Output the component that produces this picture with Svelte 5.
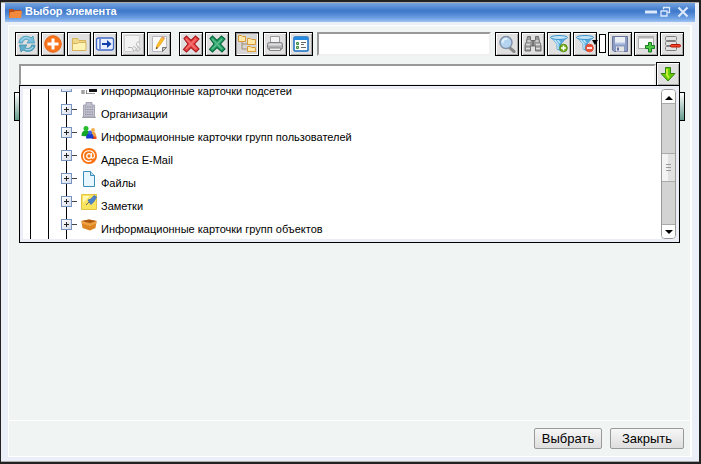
<script>
  const left = ['refresh', 'add', 'folder', 'go', 'copy', 'edit', 'red', 'green', 'tree', 'print', 'props'];
  const gaps = { copy: 4, red: 8, tree: 6, print: 4 };
  const right = ['search', 'binoculars', 'filterAdd', 'filterDel', 'save', 'newTab', 'remove'];
  const rows = [
    ['subnet', 'Информационные карточки подсетей'],
    ['building', 'Организации'],
    ['users', 'Информационные карточки групп пользователей'],
    ['mail', 'Адреса E-Mail'],
    ['file', 'Файлы'],
    ['note', 'Заметки'],
    ['box', 'Информационные карточки групп объектов'],
    ['', '']
  ];
</script>

{#snippet funnel()}
  <path d="M2 3L8 10V15l4 2V10l6-7z" fill="#56a9dc" stroke="#4a9acb" stroke-width=".8" />
  <path d="M5 5l4 5v5M8 5l3 4" stroke="#bde5fa" stroke-width="1.500" fill="none" />
  <ellipse cx="10" cy="3.500" rx="8.500" ry="2" fill="#c3e4f7" stroke="#3f94cd" />
{/snippet}

{#snippet cross(fill, edge)}
  <path d="M3 4.500L5.500 2 10 6.500 14.500 2 18 5 13.500 10 18 15 15 18 10 13.500 5.500 18 2.500 15.500 7 10z" fill={fill} stroke={edge} stroke-width="1.100" />
  <path d="M5 5l10 10M15 5L5 15" stroke="#fff" stroke-opacity=".25" stroke-width="1.500" />
{/snippet}

{#snippet tool(name)}
  <svg width="20" height="20" viewBox="0 0 20 20">
    {#if name === 'refresh'}
      <path d="M2 9C2 3 9 0 14 4l2-2 1.500 7H10l2-2.500C9 4 6 6 5.500 9z" fill="#78c0de" stroke="#4497b7" stroke-width=".8" />
      <path d="M18 11c0 6-7 8-12 5l-2 2-1.500-7H10l-2 2.500c3 2 6 .5 6.500-2.500z" fill="#62aeca" stroke="#3b8cab" stroke-width=".8" />
      <path d="M4 7c2-4 6-4 9-2M16 13c-2 3-6 3-8 2" fill="none" stroke="#b4deec" />
    {:else if name === 'add'}
      <circle cx="10" cy="10" r="8.300" fill="#f7741c" stroke="#ef6512" />
      <path d="M10 4.500v11M4.500 10h11" stroke="#fff" stroke-width="3" />
    {:else if name === 'folder'}
      <path d="M3.500 16.500v-12h5l1.500 2h6.500v10z" fill="#efd888" stroke="#d6b35b" />
      <path d="M3.500 16.500v-7h5l1-1h7.500v8z" fill="#fff3b4" stroke="#d6b35b" />
    {:else if name === 'go'}
      <rect x="1.500" y="4" width="17" height="12" rx="2" fill="#e7effc" stroke="#4569c8" stroke-width="1.300" />
      <path d="M5 5v10" stroke="#7792d6" stroke-width="2" />
      <path d="M7 9h5V6l4.500 4-4.500 4v-3H7z" fill="#123fae" />
    {:else if name === 'copy'}
      <path d="M1.500 1.500h15v10l-6 6h-9z" fill="#f3f3f3" stroke="#d0d0d0" />
      <path d="M17 8c-4-1-4 3-3 4s3 1 3 3-3 3-4 1M5 13.500h4l2 4M10 13c2-1 4 1 3 4" fill="none" stroke="#b6b6b6" />
    {:else if name === 'edit'}
      <path d="M3.500 2.500h14v11l-4 4h-10z" fill="#fafafa" stroke="#b6b6be" />
      <path d="M17.500 13.500l-4 4v-4z" fill="#ccc" stroke="#777" />
      <path d="M7 15l1-4 5-8 2.500 1.500-5.500 8z" fill="#ffc02d" stroke="#e99a15" stroke-width=".7" />
      <path d="M7 15l.5-2 1.500 1z" fill="#222" /><path d="M13 3l2.500 1.500" stroke="#e59b78" stroke-width="2" />
    {:else if name === 'red'}
      {@render cross('#ef4545', '#a71a1e')}
    {:else if name === 'green'}
      {@render cross('#25a567', '#0b653c')}
    {:else if name === 'tree'}
      <path d="M5 7v8h5M5 10h6" stroke="#a28b70" fill="none" />
      <g fill="#ffe8a8" stroke="#d89a3a">
        <path d="M1.500 1.500h3l1 1h3v5h-7zM10.500 4.500h3l1 1h4v5h-8zM10.500 12.500h3l1 1h4v4h-8z" />
      </g>
    {:else if name === 'print'}
      <path d="M5.500 8V2.500h9V8" fill="#f4f4f4" stroke="#999" />
      <rect x="2.500" y="8.500" width="15" height="7" rx="2" fill="#b1b1b5" stroke="#808084" />
      <path d="M3.500 10.500h13" stroke="#ddd" stroke-width="2" /><path d="M4.500 14h11v2.500h-11z" fill="#eee" stroke="#888" />
    {:else if name === 'props'}
      <rect x="3" y="3" width="14" height="14" rx="1" fill="#fff" stroke="#176fc1" stroke-width="1.500" />
      <path d="M3 4.500h14" stroke="#268ae0" stroke-width="3" />
      <path d="M5.500 8.500h2v2h-2zM5.500 12.500h2v2h-2z" fill="#9bd98f" stroke="#438b40" />
      <path d="M10 8.500h5M10 10.500h3M10 13.500h5" stroke="#666" />
    {:else if name === 'search'}
      <path d="M13 14l4 3.500" stroke="#888" stroke-width="3" stroke-linecap="round" />
      <circle cx="9" cy="8.500" r="6" fill="#b5d4ef" stroke="#8393a9" stroke-width="1.500" />
      <path d="M5.500 9c0-3 2-5 5-4" stroke="#e2f1fc" stroke-width="2" fill="none" />
    {:else if name === 'binoculars'}
      <path d="M4.500 2.500h3v4h5v-4h3l1 5 1.500 4v5.500h-5.500v-5h-5v5H2v-5.500l1.500-4z" fill="#999" stroke="#666" stroke-width=".9" />
      <path d="M4.500 7h3M12.500 7h3M3 10.500h4M13 10.500h4M3 14.500h4M13 14.500h4" stroke="#ddd" stroke-width="1.500" /><path d="M10 7v5" stroke="#555" />
    {:else if name === 'filterAdd'}
      {@render funnel()}
      <circle cx="14.500" cy="14" r="3.800" fill="#73af19" stroke="#5a9113" /><path d="M14.500 11.500v5M12 14h5" stroke="#fff" stroke-width="1.500" />
    {:else if name === 'filterDel'}
      {@render funnel()}
      <circle cx="14.500" cy="14" r="3.800" fill="#ee5036" stroke="#dc4a30" /><path d="M12 14h5" stroke="#fff" stroke-width="1.700" />
    {:else if name === 'save'}
      <path d="M2.500 2.500h15v15H4l-1.500-1.500z" fill="#8b9bc4" stroke="#6a779d" />
      <path d="M5 3h10v6H5z" fill="#eceff4" /><path d="M5 9.500h10" stroke="#b4c4e5" stroke-width="2" />
      <path d="M6 12.500h8v5H6z" fill="#e5e5e8" /><path d="M7 13.500h2v3H7z" fill="#5f6f9b" />
    {:else if name === 'newTab'}
      <path d="M2.500 2.500h15v12h-15z" fill="#fbfbfb" stroke="#aaa" /><path d="M2 3.500h16" stroke="#b5b5b5" stroke-width="2" />
      <path d="M12.500 8.500h3v3h3v3h-3v3.500h-3v-3.500h-3v-3h3z" fill="#4cc744" stroke="#167c20" />
    {:else}
      <g fill="#e2e2e2" stroke="#808080"><rect x="3.500" y="2.500" width="11" height="4" rx="1" /><rect x="3.500" y="7.500" width="11" height="4" rx="1" /><rect x="3.500" y="12.500" width="11" height="4" rx="1" /></g>
      <rect x="8.500" y="10.500" width="10" height="2.500" rx="1.200" fill="#f44624" stroke="#b01408" />
    {/if}
  </svg>
{/snippet}

{#snippet treeIcon(name)}
  <svg class="ticon" width="16" height="16" viewBox="0 0 16 16">
    {#if name === 'subnet'}
      <path d="M8 8h8v5H8z" fill="#111" /><path d="M5 14.500h9" stroke="#999" /><path d="M0 11h4v4H0z" fill="#bbb" /><path d="M2 11v4M5.500 11v4" stroke="#888" />
    {:else if name === 'building'}
      <path d="M1 15.500h14" stroke="#aaa" stroke-width="1.500" /><path d="M5 3V.5h6V3h2.500v12h-11V3z" fill="#bfbfce" stroke="#9696a8" stroke-width=".8" />
      <path d="M4 5h8M4 7.500h8M4 10h8M4 12.500h8" stroke="#8b8b9e" stroke-width="1.200" stroke-dasharray="1.300 .9" />
    {:else if name === 'users'}
      <path d="M9.500 12c0-3 0-4 1-5h3c1.500 1 1.500 3 2 5z" fill="#f0a24a" /><circle cx="12" cy="5" r="2" fill="#f4b04e" /><path d="M11 14v-2c1-1 3-1 4.500 0v2z" fill="#ed4b17" />
      <path d="M.5 11c0-3 1-5 3-5.500h3c2 .5 2.500 3 2.500 6z" fill="#12a526" /><circle cx="5" cy="3.500" r="2.500" fill="#26bd2b" />
      <path d="M5 13.500c0-3 1-4 2.500-5h3c2 1 2 3 2 5z" fill="#173bce" /><circle cx="9" cy="7.500" r="2" fill="#3b64e0" />
    {:else if name === 'mail'}
      <circle cx="8" cy="8" r="8" fill="#f87412" />
      <circle cx="8" cy="8" r="2.300" fill="none" stroke="#fff" stroke-width="1.300" /><path d="M10.500 5v4c0 2 3 1.500 3-1 0-7-11-7-11 0 0 5 5 6.500 8 4.500" fill="none" stroke="#fff" stroke-width="1.200" />
    {:else if name === 'file'}
      <path d="M2.500.5h7l4 4v11h-11z" fill="#e8f6ff" stroke="#3d8dba" /><path d="M9.500.5v4h4" fill="#b8dff5" stroke="#3d8dba" />
    {:else if name === 'note'}
      <path d="M.5.500h15v15H.5z" fill="#f8e45f" stroke="#e0c445" /><path d="M2 2h7L2 9z" fill="#fff6b4" />
      <path d="M5 11l4-4" stroke="#666" /><path d="M7 6l3-1 3-3.500 2.500 1.500-2.500 4.500-3 3z" fill="#4d83cc" stroke="#3c6fb5" stroke-width=".8" />
    {:else if name === 'box'}
      <path d="M.5 4l7.500-1.500L15.500 4l-1 7L9 13.500 1.500 11z" fill="#db8420" /><path d="M.5 4l7.500-1.500L15.500 4 9 6z" fill="#ab5810" /><path d="M.5 4L9 6.500 15.500 4v2.500L9 9 .5 6.500z" fill="#eea042" />
    {/if}
  </svg>
{/snippet}

<div class="desktop">
  <div class="window">
    <header>
      <svg width="14" height="12" viewBox="0 0 14 12"><path d="M1 11V2h4l1 1h7v8z" fill="#b8501c" /><path d="M1 11l1-6h4l1-1h7l-1 7z" fill="#f18a3c" /></svg>
      <h1>Выбор элемента</h1>
      <svg width="46" height="14" viewBox="0 0 46 14" fill="none" stroke="#dbe9fb">
        <path d="M1 7h12" stroke-width="3" /><path d="M19.500 4.500V2.500h6v5h-2" stroke-width="1.300" /><path d="M17 6h6v5h-6z" stroke-width="1.300" /><path d="M34.500 2.500l9 9M43.500 2.500l-9 9" stroke-width="2.200" />
      </svg>
    </header>
    <main>
      <section class="content">
        <div class="toolbar">
          {#each left as name}
            <button class="tool" class:pressed={name === 'tree'} style:margin-left="{gaps[name] ? gaps[name] : 2}px">{@render tool(name)}</button>
          {/each}
          <input class="query" aria-label="Поиск" />
          {#each right as name}
            <button class="tool" style:margin-left={name === 'search' ? '4px' : '2px'}>{@render tool(name)}</button>
            {#if name === 'filterDel'}<span class="mini"><i></i></span>{/if}
          {/each}
        </div>
        <div class="combo">
          <input aria-label="Элемент" />
          <button class="tool"><svg width="20" height="20" viewBox="0 0 20 20"><path d="M7.500 3.500h5v6h4.500L10 17 3 9.500h4.500z" fill="#64cc00" stroke="#368315" /><path d="M9 5v6l2 3" stroke="#c6ee35" stroke-width="2" fill="none" /></svg></button>
        </div>
        <div class="strip">
          <div class="dropdown">
            <div class="tree">
              {#each rows as [icon, label]}
                <div class="row">
                  <span class="guide"></span><span class="guide"></span>
                  <span class="branch"><b></b></span>
                  {@render treeIcon(icon)}
                  <span class="label">{label}</span>
                </div>
              {/each}
            </div>
            <div class="scroll">
              <span class="arrow"><i class="up"></i></span>
              <span class="track"></span>
              <span class="thumb"><i></i><i></i><i></i></span>
              <span class="track"></span>
              <span class="arrow"><i class="down"></i></span>
            </div>
          </div>
        </div>
      </section>
      <footer><button>Выбрать</button><button class="close">Закрыть</button></footer>
    </main>
  </div>
</div>

<style>
  * { box-sizing: border-box; }
  .desktop { width: 701px; height: 464px; padding: 2px 2px 2px 1px; background: #222; font: 11px "Liberation Sans", Arial, sans-serif; color: #000; overflow: hidden; }
  .window { height: 460px; padding: 1px 4px 5px 4px; background: #ebeff7; border-bottom: 1px solid #aaa; border-top: 1px solid #aaa; }
  header { height: 19px; margin-top: -1px; padding: 0 5px 0 3px; display: flex; align-items: center; gap: 3px; background: linear-gradient(#75a4e0, #3f79cb 40%, #477fce 50%, #6ea1e4 80%, #9fc3f2); }
  header > svg:last-child { margin-top: -1px; }
  h1 { flex: 1; margin: 0 0 3px; font-size: 11px; line-height: 15px; color: #fff; }
  main { height: 432px; margin: 3px 3px 0; border: 1px solid #fff; border-right-width: 2px; background: #f0f4f3; display: flex; flex-direction: column; }
  .content { height: 394px; padding: 6px 5px 0 4px; }
  .toolbar { display: flex; height: 24px; }
  .tool { width: 24px; height: 24px; flex: none; padding: 0; border: 1px solid #000; background: #e0e0e0; display: flex; align-items: center; justify-content: center; box-shadow: inset 1px 1px #fff, inset -1px -1px #a8a8a8; }
  .pressed { background: #d6d6d6; box-shadow: inset 1px 1px #999, inset -1px -1px #fff; }
  svg { display: block; flex: none; }
  input { border: 2px solid; border-color: #999 #f0f0f0 #f0f0f0 #999; background: #fff; padding: 0; margin: 0; border-radius: 0; }
  .query { width: 174px; height: 24px; margin-left: 4px; }
  .mini { width: 7px; height: 19px; margin: 2px 0 0 2px; border: 1px solid #000; background: #fff; position: relative; }
  .mini i { position: absolute; left: -8px; top: 5px; border: 3px solid transparent; border-top: 5px solid #000; border-bottom: 0; }
  .combo { height: 24px; margin: 6px 0 0 6px; display: flex; align-items: flex-end; }
  .combo input { width: 637px; height: 22px; }
  .strip { height: 29px; margin: 6px 0 0 1px; border: 1px solid #000; background: linear-gradient(#fff, #65998b); }
  .dropdown { position: relative; width: 661px; height: 158px; margin: -8px 0 0 4px; border: 1px solid #000; background: #ebeff5; padding: 3px; display: flex; }
  .tree { width: 638px; height: 150px; background: #fff; overflow: hidden; }
  .row { height: 23px; display: flex; padding-left: 7px; }
  .row:first-child { margin-top: -13px; }
  .guide { width: 18px; border-left: 1px solid #000; }
  .branch { width: 15px; padding-top: 5px; background: linear-gradient(#000, #000) 0 0 / 1px 100% no-repeat; }
  .branch b { display: block; width: 16px; height: 11px; margin-left: -5px; background: linear-gradient(#222, #222) 3px 5px / 5px 1px no-repeat, linear-gradient(#222, #222) 5px 3px / 1px 5px no-repeat, linear-gradient(#444, #444) 11px 5px / 5px 1px no-repeat, linear-gradient(135deg, #fff, #d4dae6) 1px 1px / 9px 9px no-repeat, linear-gradient(#7994c1, #7994c1) 0 0 / 11px 11px no-repeat; }
  .ticon { margin: 3px 4px 0 0; }
  .label { line-height: 13px; padding-top: 9px; white-space: nowrap; }
  .scroll { width: 15px; height: 150px; border: 1px solid #999; border-radius: 4px; overflow: hidden; display: flex; flex-direction: column; background: #fff; }
  .arrow { height: 13px; display: flex; align-items: center; justify-content: center; flex: none; background: #fff; }
  .up, .down { border: 4px solid transparent; }
  .up { border-top: 0; border-bottom-color: #000; margin-top: 2px; }
  .down { border-bottom: 0; border-top-color: #000; }
  .track { flex: none; height: 50px; background: #d3d3d3; border-top: 1px solid #aaa; }
  .track:nth-child(4) { height: 43px; border-top: 0; border-bottom: 1px solid #aaa; }
  .thumb { height: 29px; flex: none; border: solid #aaa; border-width: 1px 0; background: linear-gradient(90deg, #f3f3f3 50%, #e1e1e1 50%); display: flex; flex-direction: column; justify-content: center; align-items: center; gap: 2px; }
  .thumb i { width: 5px; height: 1px; background: #999; }
  footer { height: 36px; border-top: 1px solid #fff; padding: 7px 6px 0 0; display: flex; justify-content: flex-end; gap: 8px; }
  footer button { width: 68px; height: 21px; padding: 0; border: 1px solid #999; border-radius: 2px; background: linear-gradient(#f6f6f6, #dedede); font: 13px "Liberation Sans", Arial, sans-serif; color: #000; }
  footer .close { width: 74px; }
</style>
